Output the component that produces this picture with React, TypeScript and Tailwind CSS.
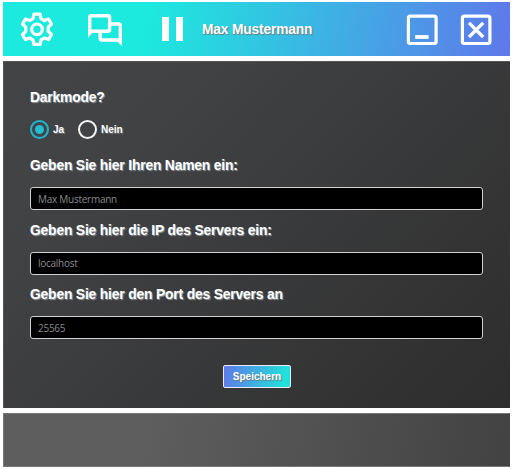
import React from "react";

const labelText =
  "text-[13.8px] leading-[20px] tracking-[-0.15px] [text-shadow:1px_1px_1px_#9a9a9a]";

function IconGear() {
  return (
    <svg width="34" height="36" viewBox="0 0 34 36" fill="none" stroke="white" strokeLinejoin="round">
      <path
        strokeWidth="3.2"
        d="M13.900 3.200h6.200l.9 4.500 3.300 1.900 4.300-1.500 2.900 5-3.300 3.100v4.200l3.300 3.100-2.900 5-4.300-1.500-3.300 1.900-.9 4.500h-6.200l-.9-4.500-3.300-1.900-4.300 1.500-2.900-5 3.300-3.100v-4.200l-3.300-3.100 2.900-5 4.300 1.500 3.300-1.900z"
      />
      <circle cx="17" cy="18.300" r="5.300" strokeWidth="3.2" />
    </svg>
  );
}

function IconChat() {
  return (
    <svg width="34" height="34" viewBox="0 0 34 34" fill="none" stroke="white" strokeWidth="3.4">
      <path d="M1.7 19V3.200q0-1.500 1.500-1.500h16.900q1.500 0 1.500 1.500v12.600q0 1.500-1.500 1.500H3z" />
      <path d="M22 10h8.800q1.500 0 1.500 1.500V26H13.700q-1.500 0-1.500-1.500V17" />
      <path fill="white" stroke="none" d="M0 23v-8l5.500 2.500zM34 32V24l-6 2.500z" />
    </svg>
  );
}

function IconMinimize() {
  return (
    <svg width="32" height="32" viewBox="0 0 32 32" fill="none" stroke="white">
      <rect x="2.400" y="3.200" width="27.700" height="27.300" rx="2" strokeWidth="3.2" />
      <path d="M9.200 24h13.400" strokeWidth="3.8" />
    </svg>
  );
}

function IconClose() {
  return (
    <svg width="32" height="32" viewBox="0 0 32 32" fill="none" stroke="white">
      <rect x="2.400" y="3.200" width="27.500" height="27.300" rx="2" strokeWidth="3.2" />
      <path d="M9 9.800l14.200 14.200M23.200 9.800L9 24" strokeWidth="3.3" />
    </svg>
  );
}

function Field({ label, value }: { label: string; value: string }) {
  return (
    <div className="h-[64.5px]">
      <div className={`h-[31px] ${labelText}`}>{label}</div>
      <input
        type="text"
        placeholder={value}
        className="block h-[23px] w-[453px] rounded-[3px] border border-[#d2d2d2] bg-black px-[7px] font-['Open_Sans','Noto_Sans',sans-serif] text-[10px] font-normal tracking-[-0.26px] text-white outline-none placeholder:text-[#8a8a8a]"
      />
    </div>
  );
}

export default function App() {
  return (
    <div className="flex h-[470px] w-[513px] flex-col gap-[5px] overflow-hidden bg-white pt-[2px] pl-[3px] font-['Liberation_Sans',Arial,sans-serif] font-bold text-white">
      <header className="flex h-[54px] w-[507px] shrink-0 items-start bg-[linear-gradient(100deg,#1ceade_0%,#1ceade_28%,#5f78ea_100%)]">
        <div className="mt-[8.500px] ml-[17px]"><IconGear /></div>
        <div className="mt-[12px] ml-[34px]"><IconChat /></div>
        <div className="mt-[15px] ml-[40px] flex gap-[7px]">
          <div className="h-[24px] w-[7px] bg-white" />
          <div className="h-[24px] w-[7px] bg-white" />
        </div>
        <div className="mt-[18px] ml-[19px] w-[203.500px] text-[13.8px] leading-[20px] tracking-[-0.17px] [text-shadow:1px_1px_1px_#777]">
          Max Mustermann
        </div>
        <div className="mt-[10.500px]"><IconMinimize /></div>
        <div className="mt-[10.500px] ml-[22px]"><IconClose /></div>
      </header>

      <main className="h-[347px] w-[507px] shrink-0 border-t border-l border-[#555] bg-[linear-gradient(135deg,#434446_0%,#414244_25%,#2d2d2d_100%)] pt-[26px] pl-[26px]">
        <div className={labelText}>Darkmode?</div>
        <div className="mt-[11px] flex h-[20px] items-center text-[10px]">
          <div className="flex size-[19px] items-center justify-center rounded-full border-2 border-[#20b6cd]">
            <div className="size-[9px] rounded-full bg-[#20bdd3]" />
          </div>
          <span className="ml-[4px] w-[25px] [text-shadow:1px_1px_1px_#777]">Ja</span>
          <div className="size-[19px] rounded-full border-2 border-[#f5f5f5]" />
          <span className="ml-[4px] [text-shadow:1px_1px_1px_#777]">Nein</span>
        </div>
        <div className="pt-[17px]">
          <Field label="Geben Sie hier Ihren Namen ein:" value="Max Mustermann" />
          <Field label="Geben Sie hier die IP des Servers ein:" value="localhost" />
          <Field label="Geben Sie hier den Port des Servers an" value="25565" />
        </div>
        <button className="mt-[15px] ml-[193px] flex h-[23px] w-[68px] items-center justify-center rounded-[2px] border border-[#e9eaff] bg-[linear-gradient(100deg,#5f78ea_0%,#22e0da_90%)] text-[10px] [text-shadow:1px_1px_1px_#777]">
          Speichern
        </button>
      </main>

      <footer className="h-[54px] w-[507px] shrink-0 border border-[#777] border-r-[#444] bg-[linear-gradient(100deg,#5e5e5e_0%,#5e5e5e_28%,#424242_100%)]" />
    </div>
  );
}
